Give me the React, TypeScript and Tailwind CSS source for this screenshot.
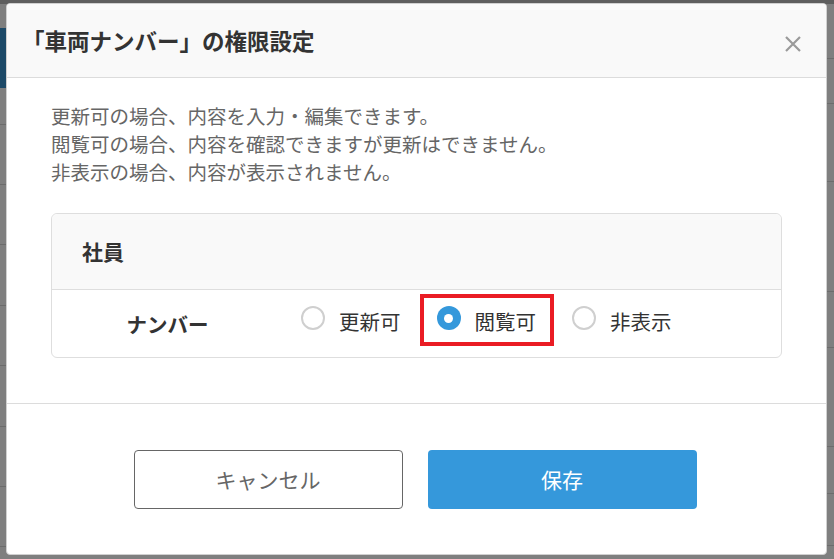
import React from "react";

const font = { fontFamily: '"Noto Sans CJK JP", "Noto Sans", sans-serif' };

function Radio({ checked }: { checked?: boolean }) {
  return checked ? (
    <span className="mb-[11px] flex h-[24px] w-[24px] shrink-0 items-center justify-center rounded-full bg-[#3498db]">
      <span className="h-[9px] w-[9px] rounded-full bg-white" />
    </span>
  ) : (
    <span className="mb-[11px] h-[24px] w-[24px] shrink-0 rounded-full border-2 border-[#cfcfcf] bg-white" />
  );
}

function Option({ label, checked, highlight }: { label: string; checked?: boolean; highlight?: boolean }) {
  return (
    <div className="relative flex items-center gap-[14px]">
      <Radio checked={checked} />
      <span className="mb-[6px] text-[20.5px] leading-[28px] text-[#333]">{label}</span>
      {highlight && (
        <span className="pointer-events-none absolute left-[-17px] right-[-18px] top-[-12px] bottom-[-5px] border-[4px] border-[#ea1c24]" />
      )}
    </div>
  );
}

export default function App() {
  const leftLines = [124, 184, 244, 305, 365, 426, 486, 546];
  const rightLines = [58, 103, 181, 291, 347, 446, 493, 545];
  return (
    <div className="relative h-[559px] w-[834px] overflow-hidden bg-[#7f7f7f]" style={font}>
      {/* dimmed page behind */}
      <div className="absolute left-0 top-0 h-[4px] w-full bg-[#5e5e5e]" />
      <div className="absolute left-0 top-[28px] h-[60px] w-[6px] bg-[#1d4a68]" />
      {leftLines.map((y) => (
        <div key={y} className="absolute left-0 h-px w-[6px] bg-[#6c6c6c]" style={{ top: y }} />
      ))}
      {rightLines.map((y) => (
        <div key={y} className="absolute right-0 h-px w-[7px] bg-[#6c6c6c]" style={{ top: y }} />
      ))}

      {/* modal */}
      <div className="relative flex h-full w-full pl-[6px] pr-[7px] pt-[3px] pb-[4px]">
        <div className="flex w-full flex-col overflow-hidden rounded-[4px] border border-[#d0d0d0] bg-white">
          {/* header */}
          <div className="flex h-[74px] shrink-0 items-center justify-between border-b border-[#dcdcdc] bg-[#f9f9f9] pl-[15px] pr-[24px]">
            <h1 className="text-[22.5px] font-bold leading-none text-[#333]">「車両ナンバー」の権限設定</h1>
            <svg width="18" height="18" viewBox="0 0 18 18" className="mt-[6px]">
              <path d="M2 2 L16 16 M16 2 L2 16" stroke="#9a9a9a" strokeWidth="2.2" strokeLinecap="butt" />
            </svg>
          </div>

          {/* body */}
          <div className="flex h-[326px] shrink-0 flex-col border-b border-[#dcdcdc] px-[44px] pt-[24px]">
            <div className="text-[19.5px] leading-[28px] text-[#666]">
              <p>更新可の場合、内容を入力・編集できます。</p>
              <p>閲覧可の場合、内容を確認できますが更新はできません。</p>
              <p>非表示の場合、内容が表示されません。</p>
            </div>

            <div className="mt-[27px] rounded-[6px] border border-[#dedede]">
              <div className="flex h-[76px] items-center rounded-t-[6px] border-b border-[#dedede] bg-[#f9f9f9] pl-[30px]">
                <span className="text-[21px] font-bold text-[#333]">社員</span>
              </div>
              <div className="flex h-[67px] items-center">
                <div className="flex w-[234px] shrink-0 justify-center pt-[2px] pr-[3px]">
                  <span className="text-[20.5px] font-bold text-[#333]">ナンバー</span>
                </div>
                <div className="flex items-center gap-[36px] pl-[15px]">
                  <Option label="更新可" />
                  <Option label="閲覧可" checked highlight />
                  <Option label="非表示" />
                </div>
              </div>
            </div>
          </div>

          {/* footer */}
          <div className="flex flex-1 items-center justify-center gap-[25px] pt-[1px] pr-[3px]">
            <button className="flex h-[59px] w-[269px] items-center justify-center rounded-[4px] border border-[#666] bg-white text-[21px] text-[#666]">
              キャンセル
            </button>
            <button className="flex h-[59px] w-[269px] items-center justify-center rounded-[4px] bg-[#3598db] text-[21px] text-white">
              保存
            </button>
          </div>
        </div>
      </div>
    </div>
  );
}
